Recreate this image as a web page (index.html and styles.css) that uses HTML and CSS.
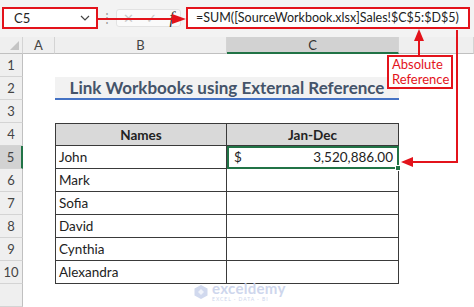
FILE: index.html
```html
<!DOCTYPE html>
<html lang="en">
<head>
  <meta charset="utf-8" />
  <title>Link Workbooks using External Reference</title>
  <link rel="stylesheet" href="styles.css">
</head>
<body>

  <div class="topbar">
    <div class="namebox">
      <span>C5</span>
      <svg class="chev" width="10" height="6" viewBox="0 0 10 6"><path d="M1 1 L5 5 L9 1" fill="none" stroke="#444" stroke-width="1.2"/></svg>
    </div>
    <span class="vdots">⋮</span>
    <div class="fxbox">
      <span class="cancel">✕</span>
      <span class="enter">✓</span>
      <span class="fx">f</span>
    </div>
    <div class="formula">=SUM([SourceWorkbook.xlsx]Sales!$C$5:$D$5)</div>
  </div>

  <div class="sheet">
    <!-- column headers -->
    <div class="corner"><span class="tri"></span></div>
    <div class="colhead">A</div>
    <div class="colhead">B</div>
    <div class="colhead active">C</div>
    <div class="colhead"></div>

    <!-- 1 -->
    <div class="rowhead">1</div><div></div><div></div><div></div><div></div>
    <!-- 2 -->
    <div class="rowhead">2</div><div></div>
    <div class="title">Link Workbooks using External Reference</div>
    <div></div>
    <!-- 3 -->
    <div class="rowhead">3</div><div></div><div></div><div></div><div></div>
    <!-- 4 -->
    <div class="rowhead">4</div><div></div>
    <div class="td th first b">Names</div>
    <div class="td th first c">Jan-Dec</div>
    <div></div>
    <!-- 5 -->
    <div class="rowhead active">5</div><div></div>
    <div class="td b">John</div>
    <div class="td c sel"><span>$</span><span>3,520,886.00</span></div>
    <div></div>
    <!-- 6 -->
    <div class="rowhead">6</div><div></div>
    <div class="td b">Mark</div><div class="td c"></div><div></div>
    <!-- 7 -->
    <div class="rowhead">7</div><div></div>
    <div class="td b">Sofia</div><div class="td c"></div><div></div>
    <!-- 8 -->
    <div class="rowhead">8</div><div></div>
    <div class="td b">David</div><div class="td c"></div><div></div>
    <!-- 9 -->
    <div class="rowhead">9</div><div></div>
    <div class="td b">Cynthia</div><div class="td c"></div><div></div>
    <!-- 10 -->
    <div class="rowhead">10</div><div></div>
    <div class="td b">Alexandra</div><div class="td c"></div><div></div>
    <!-- 11 -->
    <div class="rowhead"></div><div></div><div></div><div></div><div></div>
  </div>

  <!-- annotations -->
  <svg class="arrows" width="474" height="307" viewBox="0 0 474 307">
    <g fill="none" stroke="#e3131b" stroke-width="2">
      <path d="M98 19 H174"/>
      <path d="M419 55 V40"/>
      <path d="M457 30 V162 H412"/>
    </g>
    <g fill="#e3131b">
      <path d="M186 19 L172 14 L172 24 Z"/>
      <path d="M419 29 L414 41 L424 41 Z"/>
      <path d="M401 162 L413 157 L413 167 Z"/>
    </g>
  </svg>
  <div class="note">Absolute<br>Reference</div>

  <div class="watermark">
    <svg width="16" height="16" viewBox="0 0 16 16"><path d="M8 1 L14.5 4.5 V11.5 L8 15 L1.5 11.5 V4.5 Z" fill="#c9d3ec"/><path d="M5 8 L8 5 L11 8 L8 11 Z" fill="#eef1fa"/></svg>
    <div class="wm-text">
      <span class="wm-name">exceldemy</span>
      <span class="wm-sub">EXCEL · DATA · BI</span>
    </div>
  </div>

</body>
</html>
```

FILE: styles.css
```css
:root {
  --red:      #e3131b;
  --green:    #217346;
  --grid:     #d4d4d4;
  --head-bg:  #efefef;
  --text:     #222;
  --border:   #3a3a3a;
}
*, *::before, *::after { box-sizing: border-box; margin:0; padding:0; }
body {
  width:474px;height:307px;overflow:hidden;position:relative;
  background:#f3f3f3;
  font-family:"Lato","Open Sans",sans-serif;
  color:var(--text);
}

/* formula bar */
.topbar {
  height:37px;padding-top:7px;
  display:flex;align-items:flex-start;
}
.namebox {
  width:96px;height:22px;margin-left:2px;
  border:2px solid var(--red);background:#fff;
  display:flex;align-items:center;justify-content:space-between;
  padding:0 6px 0 10px;font-size:13px;
}
.vdots { width:18px;text-align:center;color:#999;font-size:12px;line-height:22px; }
.fxbox {
  width:65px;height:18px;margin-top:2px;
  background:#fafafa;border:1px solid #e2e2e2;border-radius:3px;
  display:flex;align-items:center;justify-content:space-around;
  font-size:13px;color:#c8c8c8;
}
.fxbox .fx { color:#333;font-family:"Liberation Serif",serif;font-style:italic;font-size:16px; }
.formula {
  width:284px;height:22px;margin-left:5px;
  border:2px solid var(--red);background:#fff;
  font-size:12.5px;line-height:18px;padding-left:8px;white-space:nowrap;
}

/* sheet grid */
.sheet {
  display:grid;
  grid-template-columns:23px 32px 172px 172px 1fr;
  grid-template-rows:17px repeat(11,23px);
  background:#fff;
}
.corner, .colhead {
  background:var(--head-bg);
  border-right:1px solid var(--grid);border-bottom:1px solid #c0c0c0;
}
.corner { position:relative; }
.corner .tri {
  position:absolute;right:3px;bottom:3px;
  border-style:solid;border-width:0 0 9px 9px;
  border-color:transparent transparent #c4c4c4 transparent;
}
.colhead {
  font-size:13px;color:#444;text-align:center;line-height:16px;
}
.colhead.active {
  background:#d2d2d2;border-bottom:2px solid var(--green);color:#333;
}
.rowhead {
  background:var(--head-bg);
  border-right:1px solid #c0c0c0;border-bottom:1px solid var(--grid);
  font-size:13px;color:#444;text-align:center;line-height:22px;
}
.rowhead.active {
  background:#d2d2d2;border-right:2px solid var(--green);
}

.title {
  grid-column:3 / 5;
  background:#f2f2f2;border-bottom:2px solid #4472c4;
  color:#44546a;font-weight:700;font-size:17px;
  text-align:center;line-height:22px;
}

.td {
  font-size:13.5px;line-height:22px;padding:0 3px;
  border-bottom:1px solid var(--border);border-right:1px solid var(--border);
}
.td.b { border-left:1px solid var(--border); }
.td.first { border-top:1px solid var(--border); }
.th { background:#d9d9d9;font-weight:700;text-align:center; }
.td.sel {
  position:relative;
  border:2px solid var(--green);
  display:flex;justify-content:space-between;padding:0 4px 0 5px;line-height:19px;
}
.td.sel::after {
  content:"";position:absolute;right:-4px;bottom:-4px;
  width:6px;height:6px;background:var(--green);border:1px solid #fff;
}

/* annotations */
.arrows { position:absolute;left:0;top:0;pointer-events:none; }
.note {
  position:absolute;left:387px;top:55px;width:66px;height:34px;
  border:2px solid var(--red);background:#fff;
  color:var(--red);font-size:13px;line-height:15px;padding:0 0 0 3px;
}

.watermark {
  position:absolute;left:193px;top:281px;
  display:flex;align-items:center;gap:3px;opacity:.85;
}
.wm-text { display:flex;flex-direction:column;line-height:1; }
.wm-name { font-size:15px;font-weight:700;color:#c6d0ea;letter-spacing:.3px; }
.wm-sub { font-size:5px;color:#c6d0ea;letter-spacing:1px;margin-top:1px; }
```
